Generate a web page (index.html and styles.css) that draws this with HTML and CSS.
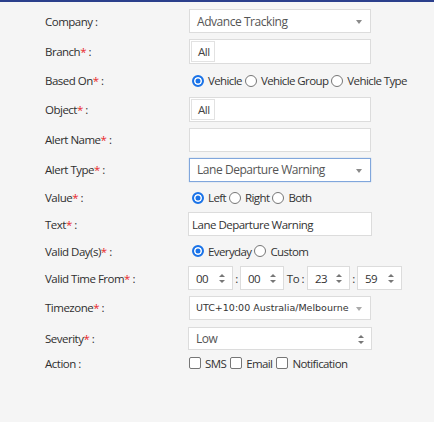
FILE: index.html
```html
<!DOCTYPE html>
<html>
<head>
<meta charset="utf-8">
<link rel="stylesheet" href="styles.css">
</head>
<body>
<div class="topbar"></div>
<div class="form">
  <div class="label"><span>Company :</span></div>
  <div class="field"><div class="box select w182"><span class="val">Advance Tracking</span><span class="caret"></span></div></div>

  <div class="label"><span>Branch<span class="req">*</span> :</span></div>
  <div class="field"><div class="box tagbox w182"><span class="tag">All</span></div></div>

  <div class="label"><span>Based On<span class="req">*</span> :</span></div>
  <div class="field opts">
    <span class="radio on"></span><span class="opt">Vehicle</span>
    <span class="radio"></span><span class="opt">Vehicle Group</span>
    <span class="radio"></span><span class="opt">Vehicle Type</span>
  </div>

  <div class="label"><span>Object<span class="req">*</span> :</span></div>
  <div class="field"><div class="box tagbox w182"><span class="tag">All</span></div></div>

  <div class="label"><span>Alert Name<span class="req">*</span> :</span></div>
  <div class="field"><div class="box w182"></div></div>

  <div class="label"><span>Alert Type<span class="req">*</span> :</span></div>
  <div class="field"><div class="box select focus w182"><span class="val">Lane Departure Warning</span><span class="caret"></span></div></div>

  <div class="label"><span>Value<span class="req">*</span> :</span></div>
  <div class="field opts">
    <span class="radio on"></span><span class="opt">Left</span>
    <span class="radio"></span><span class="opt">Right</span>
    <span class="radio"></span><span class="opt">Both</span>
  </div>

  <div class="label"><span>Text<span class="req">*</span> :</span></div>
  <div class="field"><div class="box text w184"><span class="tval">Lane Departure Warning</span></div></div>

  <div class="label"><span>Valid Day(s)<span class="req">*</span> :</span></div>
  <div class="field opts">
    <span class="radio on"></span><span class="opt">Everyday</span>
    <span class="radio"></span><span class="opt">Custom</span>
  </div>

  <div class="label"><span>Valid Time From<span class="req">*</span> :</span></div>
  <div class="field times">
    <div class="box spin w45"><span>00</span><span class="updown"></span></div>
    <span class="sep">:</span>
    <div class="box spin w44"><span>00</span><span class="updown"></span></div>
    <span class="to">To :</span>
    <div class="box spin w43"><span>23</span><span class="updown"></span></div>
    <span class="sep">:</span>
    <div class="box spin w45"><span>59</span><span class="updown"></span></div>
  </div>

  <div class="label"><span>Timezone<span class="req">*</span> :</span></div>
  <div class="field"><div class="box select tz w182"><span class="tzval">UTC+10:00 Australia/Melbourne</span><span class="caret"></span></div></div>

  <div class="label"><span>Severity<span class="req">*</span> :</span></div>
  <div class="field"><div class="box select sev w184"><span class="val">Low</span><span class="updown"></span></div></div>

  <div class="label"><span>Action :</span></div>
  <div class="field opts checks">
    <span class="check"></span><span class="opt">SMS</span>
    <span class="check"></span><span class="opt">Email</span>
    <span class="check"></span><span class="opt">Notification</span>
  </div>
</div>
</body>
</html>
```

FILE: styles.css
```css
html, body {
  margin: 0;
  padding: 0;
  background: #f5f5f5;
  font-family: "Open Sans", "Liberation Sans", sans-serif;
  font-size: 11.5px;
  letter-spacing: -0.5px;
  color: #333;
  height: 100%;
}
.topbar {
  height: 2px;
  background: #2b3f8c;
}
.form {
  display: grid;
  grid-template-columns: 144px 1fr;
  grid-template-rows: 30px 30px 29px 29px 31px 29px 27px 26px 28px 26px 33px 28px 22px;
  padding: 4px 0 0 45px;
}
.label {
  display: flex;
  align-items: center;
  color: #2f2f2f;
  white-space: nowrap;
}
.req {
  color: #e8292b;
}
.field {
  display: flex;
  align-items: center;
  white-space: nowrap;
}
.box {
  box-sizing: border-box;
  height: 24px;
  background: #fff;
  border: 1px solid #dcdcdc;
  display: flex;
  align-items: center;
  position: relative;
}
.w182 { width: 182px; }
.w184 { width: 184px; margin-left: -1px; }
.w45 { width: 45px; }
.w44 { width: 44px; }
.w43 { width: 43px; }
.select .val {
  padding-left: 7px;
  font-size: 12px;
  letter-spacing: -0.45px;
  color: #555;
}
.caret {
  position: absolute;
  right: 8px;
  top: 10px;
  width: 0;
  height: 0;
  border-left: 3.5px solid transparent;
  border-right: 3.5px solid transparent;
  border-top: 4px solid #8a8a8a;
}
.focus {
  border-color: #80a6dc;
  box-shadow: 0 0 1px #9bbbe6;
}
.tagbox {
  height: 25px;
  padding-left: 1px;
}
.tag {
  box-sizing: border-box;
  height: 21px;
  border: 1px solid #e2e2e2;
  padding: 0 4px 0 6px;
  display: flex;
  align-items: center;
  color: #444;
}
.text .tval {
  padding-left: 3px;
  color: #333;
}
.opts {
  margin-left: 3px;
}
.radio {
  box-sizing: border-box;
  width: 12px;
  height: 12px;
  border-radius: 50%;
  border: 1px solid #767676;
  background: #fff;
  margin: 0 4px 0 3px;
  flex: none;
}
.opts .radio:first-child {
  margin-left: 0;
}
.radio.on {
  border: 2px solid #1a73e8;
  box-shadow: inset 0 0 0 1.5px #fff;
  background: #1a73e8;
}
.opt {
  color: #333;
  letter-spacing: -0.6px;
}
.checks {
  margin-left: 0;
}
.check {
  box-sizing: border-box;
  width: 12px;
  height: 12px;
  border: 1px solid #767676;
  border-radius: 2px;
  background: #fff;
  margin: 0 4px 0 4px;
  flex: none;
}
.checks .check:first-child {
  margin-left: 0;
}
.times {
  margin-left: -1px;
}
.spin {
  padding-left: 7px;
  color: #333;
}
.sep {
  width: 7px;
  text-align: center;
}
.to {
  width: 23px;
  text-align: center;
}
.updown {
  position: absolute;
  right: 7px;
  top: 7px;
  width: 6px;
  height: 9px;
}
.updown::before, .updown::after {
  content: "";
  position: absolute;
  left: 0;
  width: 0;
  height: 0;
  border-left: 3px solid transparent;
  border-right: 3px solid transparent;
}
.updown::before {
  top: 0;
  border-bottom: 3.5px solid #777;
}
.updown::after {
  bottom: 0;
  border-top: 3.5px solid #777;
}
.tzval {
  padding-left: 6px;
  font-family: "DejaVu Sans", sans-serif;
  font-size: 9.5px;
  letter-spacing: 0;
  color: #333;
}
.tz .caret {
  border-top-color: #aaa;
}
.sev {
  height: 23px;
}
```
